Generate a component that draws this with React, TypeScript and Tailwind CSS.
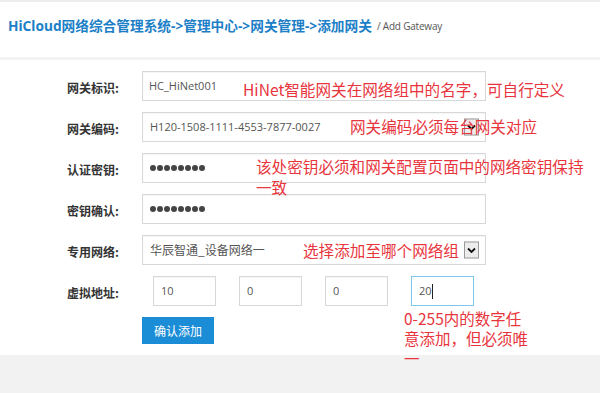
import React from 'react'

const CJK = "font-['Noto_Sans_CJK_SC',sans-serif]"

// Old-style select arrow box
const SelectArrow = () => (
    <div className="absolute right-[6px] top-1/2 -translate-y-1/2 w-[15px] h-[17px] border border-[#9a9a9a] bg-[#ececec] flex items-center justify-center">
        <svg width="9" height="6" viewBox="0 0 9 6">
            <path d="M1 1 L4.5 4.5 L8 1" fill="none" stroke="#111" strokeWidth="1.8" />
        </svg>
    </div>
)

const Label = ({ text }: { text: string }) => (
    <div className={`w-[75px] pt-[4px] text-[12px] font-bold text-[#333] ${CJK}`}>{text}</div>
)

const Box = ({ children, className = '' }: { children?: React.ReactNode; className?: string }) => (
    <div className={`relative h-[30px] border border-[#d8d8d8] bg-white flex items-center shadow-[inset_0_1px_1px_rgba(0,0,0,0.04)] ${className}`}>
        {children}
    </div>
)

const Dots = () => (
    <div className="flex gap-[1.5px] pl-[7px]">
        {Array.from({ length: 8 }).map((_, i) => (
            <span key={i} className="w-[5.5px] h-[5.5px] rounded-full bg-[#444]" />
        ))}
    </div>
)

export default function App() {
    const ip = ['10', '0', '0']

    return (
        <div className={`relative w-[600px] h-[393px] flex flex-col bg-white border-t-2 border-[#ededed] overflow-hidden ${CJK}`}>
            {/* header */}
            <div className="h-[55px] flex items-center pl-[8px] pb-[6px]">
                <span className="text-[13.7px] font-bold text-[#1c7fc7] font-['Noto_Sans','Noto_Sans_CJK_SC',sans-serif]">
                    HiCloud网络综合管理系统-&gt;管理中心-&gt;网关管理-&gt;添加网关
                </span>
                <span className="ml-[5px] text-[10px] text-[#555] font-['Open_Sans',sans-serif] tracking-[-0.2px]">/ Add Gateway</span>
            </div>
            <div className="h-[3px] bg-[#f3f3f3]" />

            {/* form */}
            <div className="flex flex-col gap-[11px] pt-[11px] pb-[11px] pl-[67px]">
                <div className="flex items-center">
                    <Label text="网关标识:" />
                    <Box className="w-[344px]">
                        <span className="pl-[6px] text-[11px] text-[#555] font-['Open_Sans',sans-serif]">HC_HiNet001</span>
                    </Box>
                </div>
                <div className="flex items-center">
                    <Label text="网关编码:" />
                    <Box className="w-[344px]">
                        <span className="pl-[7px] text-[11px] text-[#555] font-['Open_Sans',sans-serif]">H120-1508-1111-4553-7877-0027</span>
                        <SelectArrow />
                    </Box>
                </div>
                <div className="flex items-center">
                    <Label text="认证密钥:" />
                    <Box className="w-[344px]">
                        <Dots />
                    </Box>
                </div>
                <div className="flex items-center">
                    <Label text="密钥确认:" />
                    <Box className="w-[344px]">
                        <Dots />
                    </Box>
                </div>
                <div className="flex items-center">
                    <Label text="专用网络:" />
                    <Box className="w-[344px]">
                        <span className="pl-[7px] text-[12px] text-[#555]">华辰智通_设备网络一</span>
                        <SelectArrow />
                    </Box>
                </div>
                <div className="flex items-center">
                    <Label text="虚拟地址:" />
                    <div className="ml-[11px] flex gap-[23px]">
                        {ip.map((v, i) => (
                            <Box key={i} className="w-[63px]">
                                <span className="pl-[7px] text-[11px] text-[#555] font-['Open_Sans',sans-serif]">{v}</span>
                            </Box>
                        ))}
                        <div className="h-[30px] w-[63px] border border-[#7cc7ea] bg-white flex items-center">
                            <span className="pl-[7px] text-[11px] text-[#555] font-['Open_Sans',sans-serif]">20</span>
                            <span className="w-px h-[15px] bg-[#222]" />
                        </div>
                    </div>
                </div>
                <div className="flex">
                    <button className="ml-[75px] w-[72px] h-[27px] bg-[#1b8dd7] text-white text-[12px] flex items-center justify-center">
                        确认添加
                    </button>
                </div>
            </div>

            {/* footer */}
            <div className="flex-1 bg-[#f2f2f2]" />

            {/* red annotations drawn over the screenshot */}
            <div className="absolute left-[243px] top-[76px] text-[15.6px] leading-[22px] text-[#e8353d] whitespace-nowrap">
                HiNet智能网关在网络组中的名字，可自行定义
            </div>
            <div className="absolute left-[350px] top-[113px] text-[15.6px] leading-[22px] text-[#e8353d] whitespace-nowrap">
                网关编码必须每台网关对应
            </div>
            <div className="absolute left-[256px] top-[154px] text-[15.6px] leading-[21px] text-[#e8353d] whitespace-nowrap">
                该处密钥必须和网关配置页面中的网络密钥保持<br />一致
            </div>
            <div className="absolute left-[303px] top-[237px] text-[15.6px] leading-[22px] text-[#e8353d] whitespace-nowrap">
                选择添加至哪个网络组
            </div>
            <div className="absolute left-[404px] top-[306px] text-[15.5px] leading-[20px] text-[#e8353d] whitespace-nowrap">
                0-255内的数字任<br />意添加，但必须唯<br />一
            </div>
        </div>
    )
}
